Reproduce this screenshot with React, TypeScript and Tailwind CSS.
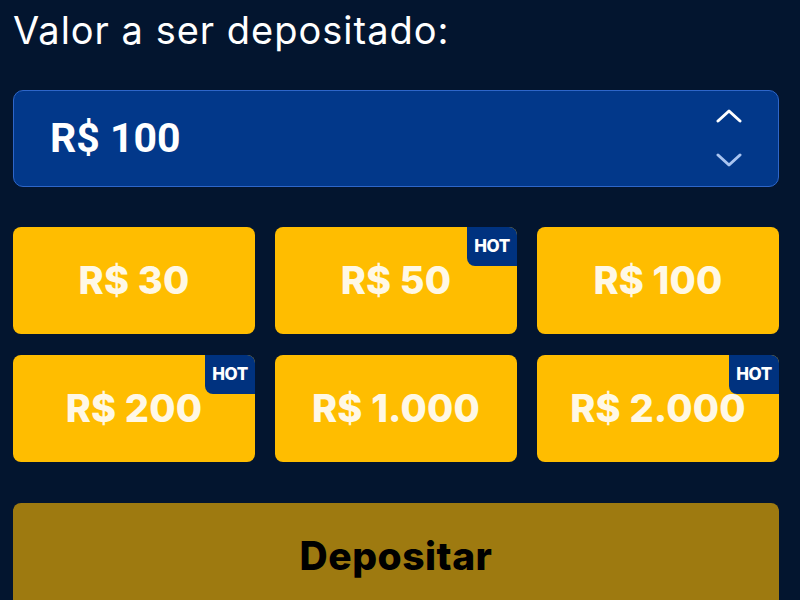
type Preset = { label: string; hot?: boolean };

const presets: Preset[] = [
  { label: "R$ 30" },
  { label: "R$ 50", hot: true },
  { label: "R$ 100" },
  { label: "R$ 200", hot: true },
  { label: "R$ 1.000" },
  { label: "R$ 2.000", hot: true },
];

const font = { fontFamily: "Inter, 'Noto Sans', sans-serif" };

function Chevron({ up, className }: { up?: boolean; className: string }) {
  return (
    <svg className={className} fill="none" height="14" viewBox="0 0 26 14" width="26">
      <polyline
        points={up ? "2,12 13,2 24,12" : "2,2 13,12 24,2"}
        stroke="currentColor"
        strokeLinecap="round"
        strokeLinejoin="round"
        strokeWidth="3"
      />
    </svg>
  );
}

export default function App() {
  return (
    <div className="min-h-screen bg-[#03152f] pl-[13px] pr-[21px] pt-[4px] overflow-hidden" style={font}>
      <h1 className="text-[38px] leading-[52px] text-white font-normal tracking-[1px]">Valor a ser depositado:</h1>

      <div className="mt-[34px] h-[97px] rounded-[10px] border border-[#2e66c9] bg-[#02388a] flex items-center justify-between pl-[36px] pr-[36px]">
        <span className="text-[41px] font-bold text-white" style={{ fontFamily: "Roboto, sans-serif" }}>
          R$ 100
        </span>
        <div className="flex flex-col gap-[30px] pb-[2px]">
          <Chevron className="text-white" up />
          <Chevron className="text-[#a9c4f0]" />
        </div>
      </div>

      <div className="mt-[40px] grid grid-cols-3 gap-x-[20px] gap-y-[21px]">
        {presets.map((p) => (
          <button
            key={p.label}
            type="button"
            className="relative h-[107px] rounded-[8px] bg-[#ffbd00] flex items-center justify-center text-[38px] font-extrabold text-[#fff8e6] tracking-[0.2px] overflow-hidden"
          >
            {p.label}
            {p.hot ? (
              <span className="absolute top-0 right-0 w-[50px] h-[39px] rounded-bl-[8px] bg-[#00327f] flex items-center justify-center text-[17px] font-extrabold text-white tracking-[-0.5px]">
                HOT
              </span>
            ) : null}
          </button>
        ))}
      </div>

      <button
        type="button"
        className="mt-[41px] w-full h-[110px] rounded-t-[8px] bg-[#9e7a10] flex items-start justify-center pt-[24px] text-[39px] font-extrabold text-black tracking-[0.5px]"
      >
        Depositar
      </button>
    </div>
  );
}
